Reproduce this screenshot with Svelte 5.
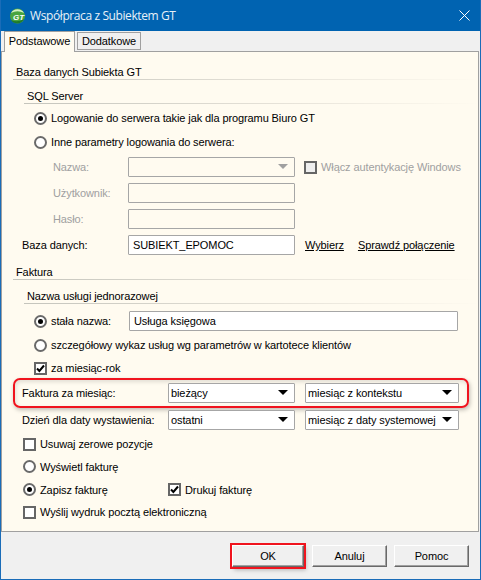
<script>
  let title = "Współpraca z Subiektem GT";
</script>

<div class="window">
  <header class="titlebar">
    <svg class="logo" width="17" height="16" viewBox="0 0 17 16">
      <circle cx="8.5" cy="8" r="7.5" fill="#4aa53f" />
      <path d="M2 5 A7.5 7.5 0 0 1 15 5 Q8.5 1.5 2 5Z" fill="#d5efc4" />
      <path d="M2 12 Q8.5 15 15 11 A7.5 7.5 0 0 1 2 12Z" fill="#1f7a2e" />
      <text x="9.5" y="12" text-anchor="middle" class="logo-text">GT</text>
    </svg>
    <span class="title">{title}</span>
    <svg class="close" width="11" height="11" viewBox="0 0 11 11">
      <path d="M0.5 0.5 L10.5 10.5 M10.5 0.5 L0.5 10.5" stroke="#fff" stroke-width="1" fill="none" />
    </svg>
  </header>

  <div class="tabs">
    <div class="tab active">Podstawowe</div>
    <div class="tab">Dodatkowe</div>
  </div>

  <main class="panel">
    <div class="head h1">Baza danych Subiekta GT</div>
    <div class="head h2 mt6">SQL Server</div>

    <div class="row r24 ind1 mt2">
      <span class="radio on"></span><span>Logowanie do serwera takie jak dla programu Biuro GT</span>
    </div>
    <div class="row r24 ind1">
      <span class="radio"></span><span>Inne parametry logowania do serwera:</span>
    </div>

    <div class="row r26 form">
      <span class="lbl off dis">Nazwa:</span>
      <div class="box w167 dis-box"><i class="arrow grey"></i></div>
      <span class="check dis-check ml9"></span><span class="off">Włącz autentykację Windows</span>
    </div>
    <div class="row r26 form">
      <span class="lbl off dis">Użytkownik:</span>
      <div class="box w167 dis-box"></div>
    </div>
    <div class="row r26 form">
      <span class="lbl off dis">Hasło:</span>
      <div class="box w167 dis-box"></div>
    </div>
    <div class="row r26 form">
      <span class="lbl">Baza danych:</span>
      <div class="box w167 white">SUBIEKT_EPOMOC</div>
      <span class="link l1">Wybierz</span>
      <span class="link l2">Sprawdź połączenie</span>
    </div>

    <div class="head h1 mt4">Faktura</div>
    <div class="head h2 mt6">Nazwa usługi jednorazowej</div>

    <div class="row r24 ind1 mt5">
      <span class="radio on"></span><span class="w-name">stała nazwa:</span>
      <div class="box wide white">Usługa księgowa</div>
    </div>
    <div class="row r24 ind1">
      <span class="radio"></span><span>szczegółowy wykaz usług wg parametrów w kartotece klientów</span>
    </div>
    <div class="row r22 ind1">
      <span class="check on"><svg width="9" height="9" viewBox="0 0 9 9"><path d="M1 4.5 L3.4 7 L8 1.5" fill="none" stroke="#000" stroke-width="2" /></svg></span><span>za miesiąc-rok</span>
    </div>

    <div class="highlight">
      <div class="row r27 form2">
        <span class="lbl2">Faktura za miesiąc:</span>
        <div class="box sel w128 white">bieżący<i class="arrow"></i></div>
        <div class="box sel w155 white">miesiąc z kontekstu<i class="arrow"></i></div>
      </div>
    </div>
    <div class="row r27 form2">
      <span class="lbl2">Dzień dla daty wystawienia:</span>
      <div class="box sel w128 white">ostatni<i class="arrow"></i></div>
      <div class="box sel w155 white">miesiąc z daty systemowej<i class="arrow"></i></div>
    </div>

    <div class="row r22 ind2">
      <span class="check"></span><span>Usuwaj zerowe pozycje</span>
    </div>
    <div class="row r23 ind2">
      <span class="radio"></span><span>Wyświetl fakturę</span>
    </div>
    <div class="row r23 ind2">
      <span class="radio on"></span><span class="w-save">Zapisz fakturę</span>
      <span class="check on"><svg width="9" height="9" viewBox="0 0 9 9"><path d="M1 4.5 L3.4 7 L8 1.5" fill="none" stroke="#000" stroke-width="2" /></svg></span><span>Drukuj fakturę</span>
    </div>
    <div class="row r22 ind2">
      <span class="check"></span><span>Wyślij wydruk pocztą elektroniczną</span>
    </div>
  </main>

  <footer class="footer">
    <button class="btn ok">OK</button>
    <button class="btn">Anuluj</button>
    <button class="btn">Pomoc</button>
  </footer>
</div>

<style>
  :global(body) {
    margin: 0;
    background: #f0f0f0;
  }
  .window {
    width: 481px;
    height: 580px;
    box-sizing: border-box;
    border: 1px solid #1a6cb8;
    border-top: 0;
    display: flex;
    flex-direction: column;
    background: #f0f0f0;
    font-family: "Liberation Sans", sans-serif;
    font-size: 11px;
    letter-spacing: -0.1px;
    color: #000;
    overflow: hidden;
  }
  .titlebar {
    height: 31px;
    flex: none;
    background: #0063b1;
    display: flex;
    align-items: center;
    padding: 0 10px 0 8px;
    color: #fff;
  }
  .logo { flex: none; margin-right: 4px; }
  .logo-text {
    font-size: 8px;
    font-weight: 700;
    font-style: italic;
    fill: #fff;
    font-family: "Liberation Sans", sans-serif;
  }
  .title {
    font-family: "Open Sans", sans-serif;
    font-size: 12px;
    letter-spacing: -0.4px;
    color: #e8f1f8;
  }
  .close { margin-left: auto; margin-right: 0; }

  .tabs {
    height: 20px;
    flex: none;
    display: flex;
    align-items: flex-end;
    padding-left: 3px;
    gap: 2px;
    position: relative;
    z-index: 1;
  }
  .tab {
    box-sizing: border-box;
    height: 18px;
    width: 64px;
    text-align: center;
    line-height: 16px;
    border: 1px solid #a0a0a0;
    background: #f0f0f0;
    margin-bottom: 1px;
  }
  .tab.active {
    height: 21px;
    line-height: 19px;
    width: 71px;
    background: #fffbf0;
    border-bottom: 0;
    margin-bottom: -1px;
  }

  .panel {
    flex: 1;
    box-sizing: border-box;
    margin: 0 1px 0 0;
    border: 1px solid #a0a0a0;
    background: #fffbf0;
    padding-top: 10px;
  }

  .head {
    box-sizing: border-box;
    height: 18px;
    padding-top: 3px;
    line-height: 14px;
    border-bottom: 1px solid;
    border-image: linear-gradient(to right, #c4c4bc, #e8e4da 60%, #fffbf0) 1;
  }
  .h1 { margin-left: 11px; padding-left: 3px; }
  .h2 { margin-left: 22px; padding-left: 3px; }
  .mt2 { margin-top: 2px; }
  .mt4 { margin-top: 4px; }
  .mt5 { margin-top: 5px; }
  .mt6 { margin-top: 6px; }

  .row {
    display: flex;
    align-items: center;
    white-space: nowrap;
  }
  .r22 { height: 22px; }
  .r23 { height: 23px; }
  .r24 { height: 24px; }
  .r26 { height: 26px; }
  .r27 { height: 27px; }
  .ind1 { padding-left: 32px; }
  .ind2 { padding-left: 21px; }
  .form { padding-left: 20px; }
  .form2 { padding-left: 20px; }
  .lbl { width: 106px; flex: none; }
  .lbl.dis { padding-left: 31px; box-sizing: border-box; }
  .lbl2 { width: 146px; flex: none; }
  .off { color: #a0a0a0; }

  .radio, .check {
    flex: none;
    box-sizing: border-box;
    width: 13px;
    height: 13px;
    margin-right: 4px;
    background: #fff;
    position: relative;
    display: flex;
    align-items: center;
    justify-content: center;
  }
  .radio {
    border: 2px solid #6a6a6a;
    border-radius: 50%;
  }
  .radio.on::after {
    content: "";
    width: 5px;
    height: 5px;
    border-radius: 50%;
    background: #000;
  }
  .check { border: 2px solid #666; }
  .dis-check { background: #eee; }
  .ml9 { margin-left: 9px; }

  .box {
    box-sizing: border-box;
    height: 20px;
    flex: none;
    line-height: 18px;
    padding-left: 4px;
    border: 1px solid #a6a6a6;
    border-radius: 1px;
    position: relative;
  }
  .sel { padding-left: 2px; }
  .white { background: #fff; }
  .dis-box { background: #fffbf0; }
  .w167 { width: 167px; }
  .w128 { width: 127px; margin-right: 10px; }
  .w155 { width: 154px; }
  .wide { width: 329px; }
  .w-name { width: 78px; flex: none; }
  .w-save { width: 128px; flex: none; }

  .arrow {
    position: absolute;
    right: 6px;
    top: 6px;
    width: 0;
    height: 0;
    border-left: 5px solid transparent;
    border-right: 5px solid transparent;
    border-top: 5px solid #000;
  }
  .arrow.grey { border-top-color: #a0a0a0; }

  .link { text-decoration: underline; }
  .l1 { margin-left: 10px; }
  .l2 { margin-left: 14px; }

  .highlight {
    position: relative;
  }
  .highlight::before {
    content: "";
    position: absolute;
    left: 11px;
    right: 9px;
    top: -1px;
    bottom: -2px;
    border: 2px solid #f0141e;
    border-radius: 7px;
    box-shadow: 1px 2px 4px rgba(0, 0, 0, 0.25), inset 1px 2px 4px rgba(0, 0, 0, 0.12);
    pointer-events: none;
  }

  .footer {
    height: 47px;
    flex: none;
    display: flex;
    justify-content: flex-end;
    align-items: center;
    padding: 0 11px 0 0;
    gap: 7px;
  }
  .btn {
    box-sizing: border-box;
    width: 75px;
    height: 22px;
    padding: 0;
    font: inherit;
    letter-spacing: inherit;
    color: #000;
    background: #f0f0f0;
    border: 1px solid;
    border-color: #fff #696969 #696969 #fff;
    box-shadow: inset -1px -1px 0 #a0a0a0;
  }
  .btn.ok {
    width: 72px;
    outline: 2px solid #f0141e;
    outline-offset: 0;
    margin-right: 1px;
    box-shadow: inset -1px -1px 0 #a0a0a0, 2px 3px 4px rgba(0, 0, 0, 0.25);
  }
</style>
